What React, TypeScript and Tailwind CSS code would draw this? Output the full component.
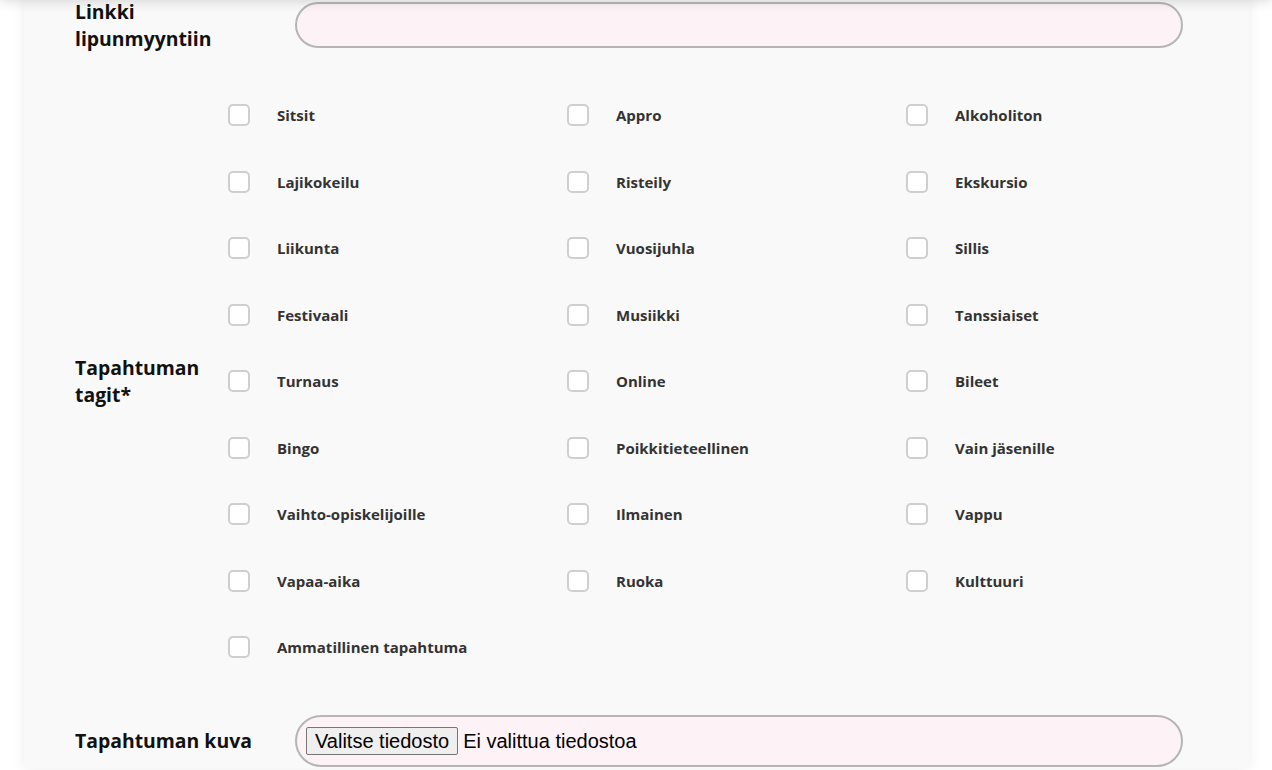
const tags = [
  "Sitsit", "Appro", "Alkoholiton",
  "Lajikokeilu", "Risteily", "Ekskursio",
  "Liikunta", "Vuosijuhla", "Sillis",
  "Festivaali", "Musiikki", "Tanssiaiset",
  "Turnaus", "Online", "Bileet",
  "Bingo", "Poikkitieteellinen", "Vain jäsenille",
  "Vaihto-opiskelijoille", "Ilmainen", "Vappu",
  "Vapaa-aika", "Ruoka", "Kulttuuri",
  "Ammatillinen tapahtuma",
];

// ─── Yksittäinen tagi-valinta ────────────────────────────────────────────────
function TagCheckbox({ label }: { label: string }) {
  return (
    <label className="flex items-center h-[66.5px] cursor-pointer">
      <span className="w-[22px] h-[22px] shrink-0 ml-[1px] rounded-[5px] border-2 border-[#cfcfcf] bg-white" />
      <span className="ml-[27px] text-[15px] font-bold text-[#333]">{label}</span>
    </label>
  );
}

export default function App() {
  return (
    <div className="relative min-h-screen bg-white overflow-hidden" style={{ fontFamily: '"Open Sans", sans-serif' }}>
      {/* header-varjo ylhäällä */}
      <div className="absolute left-0 right-0 -top-[20px] h-[20px] bg-white shadow-[0_0_14px_rgba(0,0,0,0.18)] z-10" />

      <div className="mx-[24px] w-[1225px] min-h-[770px] bg-[#f9f9f9] shadow-[0_0_12px_rgba(0,0,0,0.08)] pl-[51px] pr-[66px]">
        {/* Linkki lipunmyyntiin */}
        <div className="flex items-center -mt-[2px] h-[54px]">
          <div className="w-[220px] shrink-0 text-[19.4px] leading-[27px] font-bold text-[#111]">
            Linkki<br />lipunmyyntiin
          </div>
          <input
            type="text"
            className="flex-1 h-[46px] rounded-full border-2 border-[#b5b5b5] bg-[#fdf3f6] outline-none px-5"
          />
        </div>

        {/* Tapahtuman tagit */}
        <div className="flex items-center mt-[30px]">
          <div className="w-[152px] shrink-0 text-[19.4px] leading-[27px] font-bold text-[#111]">
            Tapahtuman<br />tagit*
          </div>
          <div className="flex-1 grid grid-cols-[339px_339px_1fr]">
            {tags.map((t) => (
              <TagCheckbox key={t} label={t} />
            ))}
          </div>
        </div>

        {/* Tapahtuman kuva */}
        <div className="flex items-center mt-[34px]">
          <div className="w-[220px] shrink-0 text-[19.4px] leading-[27px] font-bold text-[#111]">Tapahtuman kuva</div>
          <div className="flex-1 h-[52px] rounded-full border-2 border-[#b5b5b5] bg-[#fdf3f6] flex items-center pl-[9px]" style={{ fontFamily: '"Liberation Sans", Arial, sans-serif' }}>
            <button className="h-[28px] px-[8px] bg-[#efefef] border border-[#767676] rounded-[2px] text-[20px] leading-none text-black">
              Valitse tiedosto
            </button>
            <span className="ml-[5px] text-[20px] text-black">Ei valittua tiedostoa</span>
          </div>
        </div>
      </div>
    </div>
  );
}
